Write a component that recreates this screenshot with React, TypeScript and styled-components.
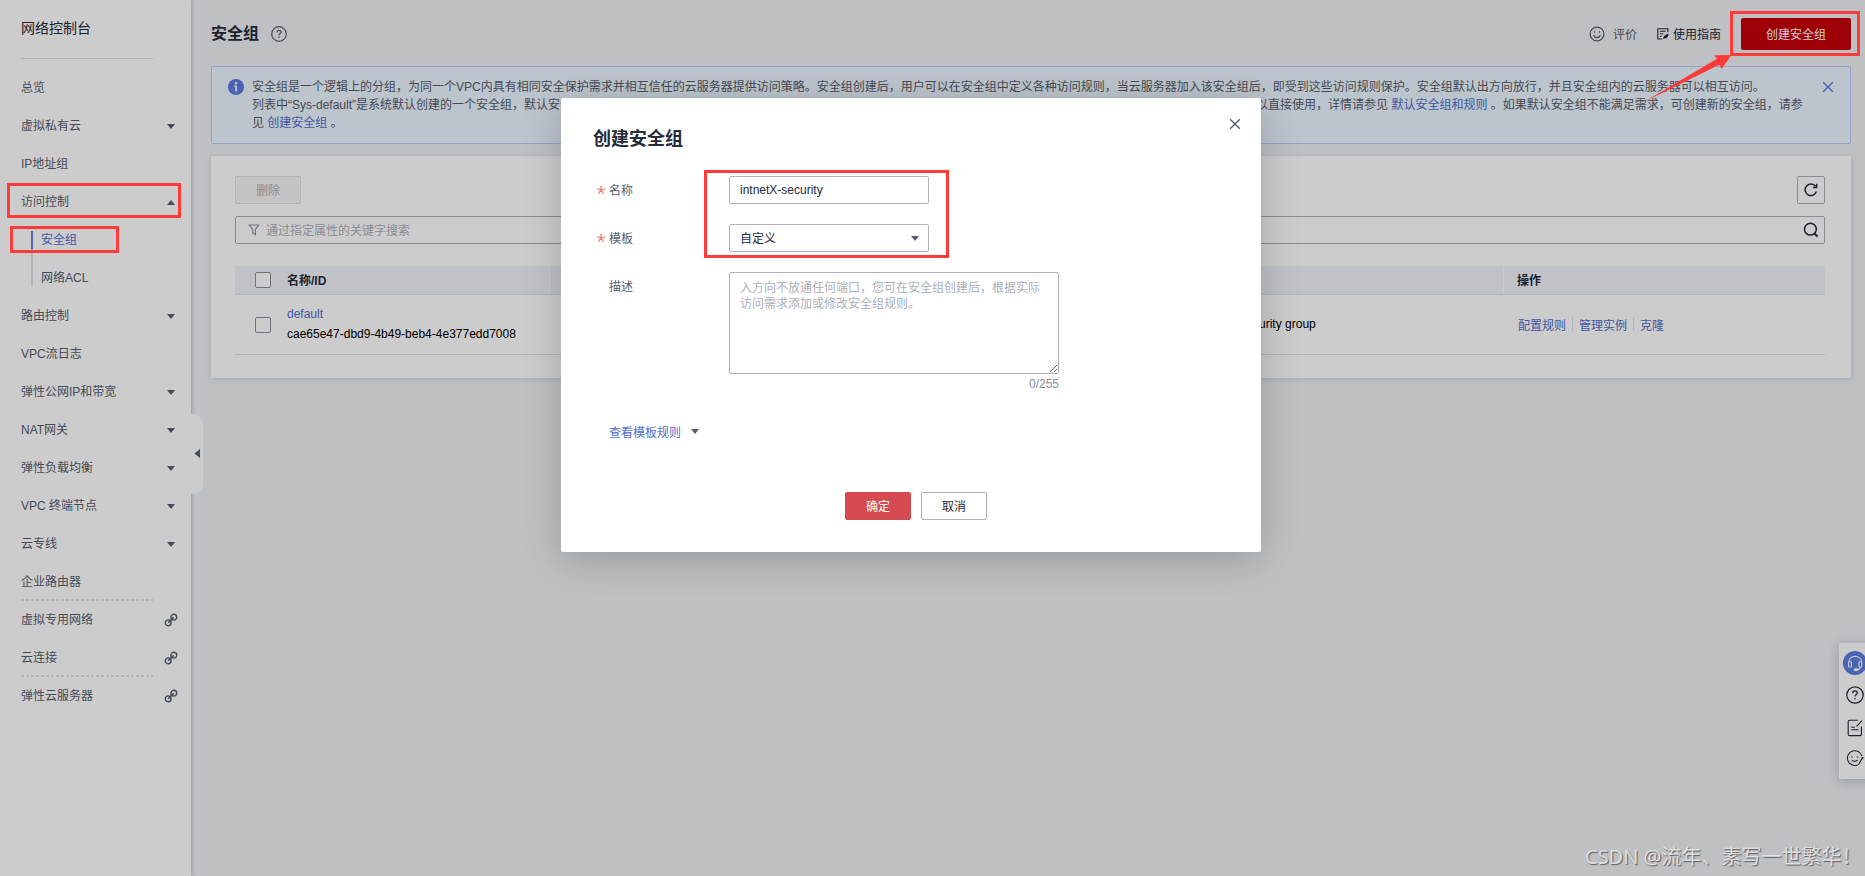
import React from "react";
import styled, { createGlobalStyle, css } from "styled-components";

const color = {
  text: "#252b3a",
  sub: "#575d6c",
  weak: "#8a8e99",
  hint: "#adb0b8",
  line: "#dfe1e6",
  link: "#526ecc",
  brand: "#5e7ce0",
  mark: "#ff3a38",
};

const Global = createGlobalStyle`
  * { box-sizing: border-box; }
  html, body { margin: 0; padding: 0; overflow: hidden; }
  body {
    font-family: "Liberation Sans", "Noto Sans CJK SC", sans-serif;
    font-size: 12px;
    color: ${color.sub};
    background: #eef0f5;
  }
  input, textarea, button { font: inherit; margin: 0; }
  svg { display: block; flex: none; }
`;

const Page = styled.div`
  position: relative;
  display: flex;
  width: 1865px;
  height: 876px;
  overflow: hidden;
  background: #eef0f5;
`;

/* ---------- side menu ---------- */

const Sidebar = styled.aside`
  position: relative;
  flex: none;
  width: 191px;
  height: 876px;
  background: #fff;
  box-shadow: 1px 0 4px rgba(37, 43, 58, 0.22);
`;

const SideTitle = styled.div`
  height: 58px;
  margin: 0 38px 0 21px;
  padding-top: 17px;
  line-height: 22px;
  font-size: 14px;
  color: ${color.text};
`;

const SideRule = styled.div`
  height: 1px;
  width: 132px;
  margin: 0 0 10px 21px;
  background: ${color.line};
`;

const MenuItem = styled.div`
  display: flex;
  align-items: center;
  justify-content: space-between;
  height: 38px;
  padding: 0 16px 0 21px;
  line-height: 18px;
`;

const MenuMark = styled.span`
  display: flex;
  justify-content: center;
  width: 8px;
`;

const LinkMark = styled.span`
  display: flex;
  margin-right: -3px;
`;

const MenuDash = styled.div`
  height: 2px;
  width: 132px;
  margin: -2px 0 0 21px;
  background: repeating-linear-gradient(90deg, ${color.line} 0 3px, transparent 3px 5px);
`;

const SubMenu = styled.div`
  display: flex;
  flex-direction: column;
  height: 76px;
  padding: 10px 0 0 31px;
`;

const SubItem = styled.div<{ $active?: boolean }>`
  height: ${(p) => (p.$active ? 18 : 38)}px;
  padding: ${(p) => (p.$active ? 0 : "20px")} 0 0 8px;
  border-left: 2px solid ${(p) => (p.$active ? color.brand : color.line)};
  color: ${(p) => (p.$active ? color.link : color.sub)};
  line-height: 18px;
`;

const Collapse = styled.div`
  position: absolute;
  left: 191px;
  top: 414px;
  width: 12px;
  height: 80px;
  display: flex;
  align-items: center;
  justify-content: center;
  padding-bottom: 1px;
  background: #fff;
  border-radius: 0 10px 10px 0;
`;

/* ---------- main ---------- */

const Main = styled.main`
  flex: 1;
  padding: 0 14px 0 20px;
`;

const Header = styled.header`
  display: flex;
  align-items: center;
  height: 66px;
  padding-top: 2px;
`;

const PageTitle = styled.h1`
  margin: 0 12px 0 0;
  font-size: 16px;
  line-height: 24px;
  color: ${color.text};
`;

const HeaderTools = styled.div`
  display: flex;
  align-items: center;
  margin-left: auto;
`;

const Tool = styled.span<{ $dark?: boolean }>`
  display: flex;
  align-items: center;
  gap: ${(p) => (p.$dark ? 4 : 8)}px;
  margin-right: 20px;
  color: ${(p) => (p.$dark ? color.text : color.sub)};
`;

const ToolText = styled.span`
  padding-bottom: 2px;
`;

const PrimaryButton = styled.button`
  width: 110px;
  height: 32px;
  padding: 0 0 2px;
  border: 0;
  border-radius: 2px;
  background: #c7000b;
  color: #fff;
`;

const Alert = styled.section`
  display: flex;
  align-items: flex-start;
  height: 78px;
  padding: 12px 16px 0 16px;
  border: 1px solid #bec8fb;
  border-radius: 2px;
  background: #ebf6ff;
`;

const AlertText = styled.p`
  flex: 1;
  margin: -1px 0 0 8px;
  line-height: 18px;
  white-space: nowrap;
`;

const AlertClose = styled.span`
  margin-top: 2px;
`;

const Anchor = styled.span`
  color: ${color.link};
`;

const Card = styled.section`
  height: 222px;
  margin-top: 12px;
  padding: 20px 26px 0 24px;
  background: #fff;
  box-shadow: 0 1px 5px rgba(37, 43, 58, 0.15);
`;

const Toolbar = styled.div`
  display: flex;
  justify-content: space-between;
`;

const DisabledButton = styled.button`
  width: 66px;
  height: 28px;
  padding: 0 0 2px;
  border: 1px solid ${color.line};
  border-radius: 2px;
  background: #f5f5f6;
  color: ${color.hint};
`;

const IconButton = styled.button`
  display: flex;
  align-items: center;
  justify-content: center;
  width: 28px;
  height: 28px;
  padding: 0;
  border: 1px solid ${color.hint};
  border-radius: 2px;
  background: transparent;
`;

const SearchBox = styled.div`
  display: flex;
  align-items: center;
  height: 28px;
  margin-top: 12px;
  padding: 0 5px 0 12px;
  border: 1px solid ${color.hint};
  border-radius: 2px;
  color: ${color.hint};
`;

const SearchHint = styled.span`
  flex: 1;
  margin-left: 6px;
  padding-bottom: 2px;
`;

const tableGrid = css`
  display: grid;
  grid-template-columns: 52px 262px 634px 320px 322px;
`;

const TableHead = styled.div`
  ${tableGrid}
  height: 29px;
  margin-top: 22px;
  border-bottom: 1px solid ${color.line};
  background: #f2f3fa;
  color: ${color.text};
  font-weight: bold;
`;

const HeadCell = styled.div<{ $divided?: boolean; $box?: boolean }>`
  display: flex;
  align-items: center;
  padding-left: ${(p) => (p.$box ? 20 : p.$divided ? 13 : 0)}px;
  padding-bottom: ${(p) => (p.$box ? 0 : 2)}px;
  border-left: ${(p) => (p.$divided ? "1px solid #fff" : "0")};
`;

const TableRow = styled.div`
  ${tableGrid}
  height: 60px;
  border-bottom: 1px solid ${color.line};
  color: #000;
`;

const Cell = styled.div<{ $pad?: number; $text?: boolean }>`
  display: flex;
  align-items: center;
  padding-left: ${(p) => p.$pad ?? 0}px;
  padding-bottom: ${(p) => (p.$text ? 1 : 0)}px;
`;

const NameCell = styled.div`
  display: flex;
  flex-direction: column;
  justify-content: center;
  padding-bottom: 1px;
  line-height: 20px;
`;

const Checkbox = styled.span`
  width: 16px;
  height: 16px;
  border: 1px solid ${color.weak};
  border-radius: 2px;
  background: #fff;
`;

const Separator = styled.i`
  width: 1px;
  height: 14px;
  margin: 0 6px;
  background: ${color.line};
`;

const FloatBar = styled.aside`
  position: absolute;
  left: 1839px;
  top: 643px;
  width: 32px;
  height: 136px;
  display: flex;
  flex-direction: column;
  align-items: center;
  padding-top: 8px;
  background: #fff;
  box-shadow: 0 2px 12px rgba(37, 43, 58, 0.24);
`;

const FloatIcon = styled.div<{ $h: number }>`
  display: flex;
  align-items: center;
  height: ${(p) => p.$h}px;
`;

/* ---------- dialog ---------- */

const Mask = styled.div`
  position: absolute;
  inset: 0;
  background: rgba(0, 0, 0, 0.2);
`;

const Dialog = styled.section`
  position: absolute;
  left: 561px;
  top: 98px;
  width: 700px;
  height: 454px;
  padding: 28px 20px 0 32px;
  border-radius: 2px;
  background: #fff;
  box-shadow: 0 8px 40px rgba(0, 0, 0, 0.2);
`;

const DialogHead = styled.div`
  display: flex;
  justify-content: space-between;
  height: 50px;
`;

const DialogTitle = styled.h2`
  margin: 0;
  font-size: 18px;
  line-height: 26px;
  color: ${color.text};
`;

const CloseButton = styled.span`
  margin-top: -8px;
`;

const FormRow = styled.div`
  display: flex;
  margin-bottom: 20px;
`;

const Label = styled.label`
  display: flex;
  align-items: center;
  width: 136px;
  height: 28px;
  padding: 0 0 2px 4px;
`;

const Required = styled.span`
  display: flex;
  width: 12px;
  padding-top: 2px;
`;

const TextInput = styled.input`
  width: 200px;
  height: 28px;
  padding: 0 10px 1px;
  border: 1px solid ${color.hint};
  border-radius: 2px;
  outline: 0;
  color: ${color.text};
`;

const SelectBox = styled.div`
  display: flex;
  align-items: center;
  justify-content: space-between;
  width: 200px;
  height: 28px;
  padding: 0 9px 0 10px;
  border: 1px solid ${color.hint};
  border-radius: 2px;
  color: ${color.text};
`;

const SelectValue = styled.span`
  padding-bottom: 2px;
`;

const TextArea = styled.textarea`
  display: block;
  width: 330px;
  height: 102px;
  padding: 7px 10px;
  border: 1px solid ${color.hint};
  border-radius: 2px;
  outline: 0;
  line-height: 16px;
  &::placeholder { color: ${color.hint}; }
`;

const Counter = styled.div`
  height: 20px;
  line-height: 20px;
  text-align: right;
  color: ${color.weak};
`;

const TemplateLink = styled.div`
  display: flex;
  align-items: center;
  gap: 10px;
  height: 20px;
  margin: 27px 0 51px 16px;
  color: ${color.link};
`;

const DialogActions = styled.div`
  display: flex;
  gap: 10px;
  margin-left: 252px;
`;

const ActionButton = styled.button<{ $primary?: boolean }>`
  width: 66px;
  height: 28px;
  padding: 0 0 2px;
  border: 1px solid ${(p) => (p.$primary ? "#d64a52" : color.hint)};
  border-radius: 2px;
  background: ${(p) => (p.$primary ? "#d64a52" : "#fff")};
  color: ${(p) => (p.$primary ? "#fff" : color.text)};
`;

/* ---------- annotations ---------- */

const Highlight = styled.div<{ $x: number; $y: number; $w: number; $h: number }>`
  position: absolute;
  left: ${(p) => p.$x}px;
  top: ${(p) => p.$y}px;
  width: ${(p) => p.$w}px;
  height: ${(p) => p.$h}px;
  border: 3px solid ${color.mark};
`;

const Arrow = styled.svg`
  position: absolute;
  left: 1640px;
  top: 50px;
`;

const Watermark = styled.div`
  position: absolute;
  left: 1585px;
  top: 842px;
  font-family: "Noto Sans", "Noto Sans CJK SC", sans-serif;
  font-size: 20px;
  line-height: 30px;
  white-space: nowrap;
  color: rgba(232, 232, 232, 0.9);
  text-shadow: 1px 1px 1px rgba(60, 60, 60, 0.75);
`;

/* ---------- icons ---------- */

const Caret = ({ up }: { up?: boolean }) => (
  <svg width="8" height="5" viewBox="0 0 8 5">
    <path d={up ? "M0 5L4 0L8 5Z" : "M0 0H8L4 5Z"} fill={color.sub} />
  </svg>
);

const ChainIcon = () => (
  <svg width="14" height="14" viewBox="0 0 14 14" fill="none" stroke={color.sub} strokeWidth="1.4">
    <circle cx="9.8" cy="4.2" r="2.9" />
    <circle cx="4.2" cy="9.8" r="2.9" />
    <path d="M4.4 9.6L9.6 4.4" strokeWidth="1.6" />
  </svg>
);

const HelpIcon = ({ size = 16, stroke = color.sub, weight = 1.2 }) => (
  <svg width={size} height={size} viewBox="0 0 16 16" fill="none" stroke={stroke} strokeWidth={weight}>
    <circle cx="8" cy="8" r="7.3" />
    <path d="M6 6.4C6 5.2 6.8 4.4 8 4.4S10.1 5.1 10.1 6.2C10.1 7.5 8 7.7 8 9.4" />
    <path d="M8 10.6V12" />
  </svg>
);

const SmileIcon = () => (
  <svg width="16" height="16" viewBox="0 0 16 16" fill="none" stroke={color.sub} strokeWidth="1.2">
    <circle cx="8" cy="8" r="6.9" />
    <path d="M4.6 9.2C5.2 10.8 6.5 11.6 8 11.6S10.8 10.8 11.4 9.2" />
    <path d="M5.6 5.2V6.8M10.4 5.2V6.8" />
  </svg>
);

const GuideIcon = () => (
  <svg width="12" height="12" viewBox="0 0 12 12" fill="none" stroke={color.text} strokeWidth="1.1">
    <path d="M10.9 4V0.7H0.8V11H5" />
    <path d="M3 3.3H8.6M3 5.8H6.2M3 8.2H4.6" />
    <path d="M6 11.3C6 8.6 8 6.4 11.6 5.4C11.5 8.6 9.8 10.4 7.4 10.6Z" fill={color.text} stroke="none" />
  </svg>
);

const InfoIcon = () => (
  <svg width="16" height="16" viewBox="0 0 16 16">
    <circle cx="8" cy="8" r="8" fill={color.brand} />
    <circle cx="8" cy="4.2" r="1.3" fill="#ebf6ff" />
    <path d="M6.2 6.6H9V12.4H7.2V7.8H6.2Z" fill="#ebf6ff" />
  </svg>
);

const CloseIcon = ({ stroke }: { stroke: string }) => (
  <svg width="12" height="12" viewBox="0 0 12 12" stroke={stroke} strokeWidth="1.4">
    <path d="M1.2 1.2L10.8 10.8M10.8 1.2L1.2 10.8" />
  </svg>
);

const RefreshIcon = () => (
  <svg width="14" height="14" viewBox="0 0 14 14" fill="none" stroke={color.text} strokeWidth="1.5">
    <path d="M12.4 8.6A5.8 5.8 0 1 1 11.6 3.4" />
    <path d="M12.6 0.8V4.4H9" />
  </svg>
);

const SearchIcon = () => (
  <svg width="16" height="16" viewBox="0 0 16 16" fill="none" stroke={color.text} strokeWidth="1.5">
    <circle cx="7.4" cy="7.2" r="5.9" />
    <path d="M11.4 11.4L14.6 14.4" strokeWidth="2" />
  </svg>
);

const FilterIcon = () => (
  <svg width="12" height="12" viewBox="0 0 12 12" fill="none" stroke={color.weak} strokeWidth="1.1">
    <path d="M1.2 1H10.8L7.4 5.4V10.8L4.8 9V5.4Z" />
  </svg>
);

const StarIcon = () => (
  <svg width="8" height="8" viewBox="0 0 8 8" stroke="#f66f6a" strokeWidth="1.2">
    <path d="M4 4V0M4 4L0.2 2.8M4 4L7.8 2.8M4 4L1.6 7.6M4 4L6.4 7.6" />
  </svg>
);

const ServiceIcon = () => (
  <svg width="24" height="24" viewBox="0 0 24 24" fill="none" stroke="#fff" strokeWidth="1.1">
    <circle cx="12" cy="12" r="12" fill={color.brand} stroke="none" />
    <path d="M6 11C6 7.4 8.6 5.4 12 5.4S18.4 7.4 18.4 11" />
    <rect x="5.6" y="10.8" width="2.8" height="5.2" rx="0.8" />
    <rect x="16" y="10.8" width="2.8" height="5.2" rx="0.8" />
    <path d="M17.6 16C17.2 17.6 16 18.6 14.6 18.6" />
    <ellipse cx="13" cy="18.7" rx="2" ry="0.9" fill="#fff" />
  </svg>
);

const NoteIcon = () => (
  <svg width="16" height="18" viewBox="0 0 16 18" fill="none" stroke={color.text} strokeWidth="1.1">
    <path d="M10.8 1.2H2.2Q1.2 1.2 1.2 2.2V15.6Q1.2 16.6 2.2 16.6H13.4Q14.4 16.6 14.4 15.6V7.6" />
    <path d="M15 1.6L9.6 7.4M4.2 8.2H7.8M4.2 10.8H11.6" />
  </svg>
);

const FeedbackIcon = () => (
  <svg width="18" height="18" viewBox="0 0 18 18" fill="none" stroke={color.text} strokeWidth="1.1">
    <path d="M11.6 16A7.4 7.4 0 1 1 16 7.2" />
    <path d="M5.8 11.2C7.4 12.6 10 12.6 11.6 11.2M5.2 8H6.8M10.8 8H12.4" />
    <path d="M12.4 15.8L16.6 8.6L17.6 9.2" />
  </svg>
);

/* ---------- page ---------- */

type Entry = { label: string; mark?: "down" | "link"; dash?: boolean };

const upperMenu: Entry[] = [
  { label: "总览" },
  { label: "虚拟私有云", mark: "down" },
  { label: "IP地址组" },
];

const lowerMenu: Entry[] = [
  { label: "路由控制", mark: "down" },
  { label: "VPC流日志" },
  { label: "弹性公网IP和带宽", mark: "down" },
  { label: "NAT网关", mark: "down" },
  { label: "弹性负载均衡", mark: "down" },
  { label: "VPC 终端节点", mark: "down" },
  { label: "云专线", mark: "down" },
  { label: "企业路由器", dash: true },
  { label: "虚拟专用网络", mark: "link" },
  { label: "云连接", mark: "link", dash: true },
  { label: "弹性云服务器", mark: "link" },
];

const MenuList = ({ entries }: { entries: Entry[] }) => (
  <>
    {entries.map((e) => (
      <React.Fragment key={e.label}>
        <MenuItem>
          {e.label}
          {e.mark === "down" && <MenuMark><Caret /></MenuMark>}
          {e.mark === "link" && <LinkMark><ChainIcon /></LinkMark>}
        </MenuItem>
        {e.dash && <MenuDash />}
      </React.Fragment>
    ))}
  </>
);

export default function App() {
  return (
    <Page>
      <Global />
      <Sidebar>
        <SideTitle>网络控制台</SideTitle>
        <SideRule />
        <MenuList entries={upperMenu} />
        <MenuItem>
          访问控制
          <MenuMark><Caret up /></MenuMark>
        </MenuItem>
        <SubMenu>
          <SubItem $active>安全组</SubItem>
          <SubItem>网络ACL</SubItem>
        </SubMenu>
        <MenuList entries={lowerMenu} />
        <Collapse>
          <svg width="6" height="9" viewBox="0 0 6 9"><path d="M6 0V9L0.5 4.5Z" fill={color.sub} /></svg>
        </Collapse>
      </Sidebar>

      <Main>
        <Header>
          <PageTitle>安全组</PageTitle>
          <HelpIcon />
          <HeaderTools>
            <Tool><SmileIcon /><ToolText>评价</ToolText></Tool>
            <Tool $dark><GuideIcon /><ToolText>使用指南</ToolText></Tool>
            <PrimaryButton>创建安全组</PrimaryButton>
          </HeaderTools>
        </Header>

        <Alert>
          <InfoIcon />
          <AlertText>
            安全组是一个逻辑上的分组，为同一个VPC内具有相同安全保护需求并相互信任的云服务器提供访问策略。安全组创建后，用户可以在安全组中定义各种访问规则，当云服务器加入该安全组后，即受到这些访问规则保护。安全组默认出方向放行，并且安全组内的云服务器可以相互访问。
            <br />
            列表中“Sys-default”是系统默认创建的一个安全组，默认安全组的规则是在出方向上的数据报文全部放行，入方向访问受限，安全组内的云服务器无需添加规则即可互相访问。默认安全组您可以直接使用，详情请参见 <Anchor>默认安全组和规则</Anchor> 。如果默认安全组不能满足需求，可创建新的安全组，请参
            <br />
            见 <Anchor>创建安全组</Anchor> 。
          </AlertText>
          <AlertClose><CloseIcon stroke={color.brand} /></AlertClose>
        </Alert>

        <Card>
          <Toolbar>
            <DisabledButton>删除</DisabledButton>
            <IconButton><RefreshIcon /></IconButton>
          </Toolbar>
          <SearchBox>
            <FilterIcon />
            <SearchHint>通过指定属性的关键字搜索</SearchHint>
            <SearchIcon />
          </SearchBox>
          <TableHead>
            <HeadCell $box><Checkbox /></HeadCell>
            <HeadCell>名称/ID</HeadCell>
            <HeadCell $divided />
            <HeadCell $divided />
            <HeadCell $divided>操作</HeadCell>
          </TableHead>
          <TableRow>
            <Cell $pad={20}><Checkbox /></Cell>
            <NameCell>
              <Anchor>default</Anchor>
              <span>cae65e47-dbd9-4b49-beb4-4e377edd7008</span>
            </NameCell>
            <Cell />
            <Cell $pad={16} $text>Default security group</Cell>
            <Cell $pad={15} $text>
              <Anchor>配置规则</Anchor>
              <Separator />
              <Anchor>管理实例</Anchor>
              <Separator />
              <Anchor>克隆</Anchor>
            </Cell>
          </TableRow>
        </Card>
      </Main>

      <FloatBar>
        <FloatIcon $h={24}><ServiceIcon /></FloatIcon>
        <FloatIcon $h={39}><HelpIcon size={18} stroke={color.text} weight={1.1} /></FloatIcon>
        <FloatIcon $h={27}><NoteIcon /></FloatIcon>
        <FloatIcon $h={33}><FeedbackIcon /></FloatIcon>
      </FloatBar>

      <Mask />

      <Dialog>
        <DialogHead>
          <DialogTitle>创建安全组</DialogTitle>
          <CloseButton><CloseIcon stroke={color.sub} /></CloseButton>
        </DialogHead>
        <FormRow>
          <Label><Required><StarIcon /></Required>名称</Label>
          <TextInput defaultValue="intnetX-security" />
        </FormRow>
        <FormRow>
          <Label><Required><StarIcon /></Required>模板</Label>
          <SelectBox><SelectValue>自定义</SelectValue><Caret /></SelectBox>
        </FormRow>
        <FormRow>
          <Label><Required />描述</Label>
          <div>
            <TextArea placeholder="入方向不放通任何端口，您可在安全组创建后，根据实际访问需求添加或修改安全组规则。" />
            <Counter>0/255</Counter>
          </div>
        </FormRow>
        <TemplateLink>查看模板规则<Caret /></TemplateLink>
        <DialogActions>
          <ActionButton $primary>确定</ActionButton>
          <ActionButton>取消</ActionButton>
        </DialogActions>
      </Dialog>

      <Highlight $x={7} $y={183} $w={174} $h={35} />
      <Highlight $x={10} $y={226} $w={109} $h={27} />
      <Highlight $x={704} $y={170} $w={245} $h={88} />
      <Highlight $x={1730} $y={11} $w={130} $h={45} />
      <Arrow width="95" height="56" viewBox="1640 50 95 56">
        <path d="M1731.5 55L1714 55.3L1717 58.8L1644.3 101.8L1719.3 64.8L1721.6 69Z" fill={color.mark} />
      </Arrow>
      <Watermark>CSDN @流年、素写一世繁华！</Watermark>
    </Page>
  );
}
